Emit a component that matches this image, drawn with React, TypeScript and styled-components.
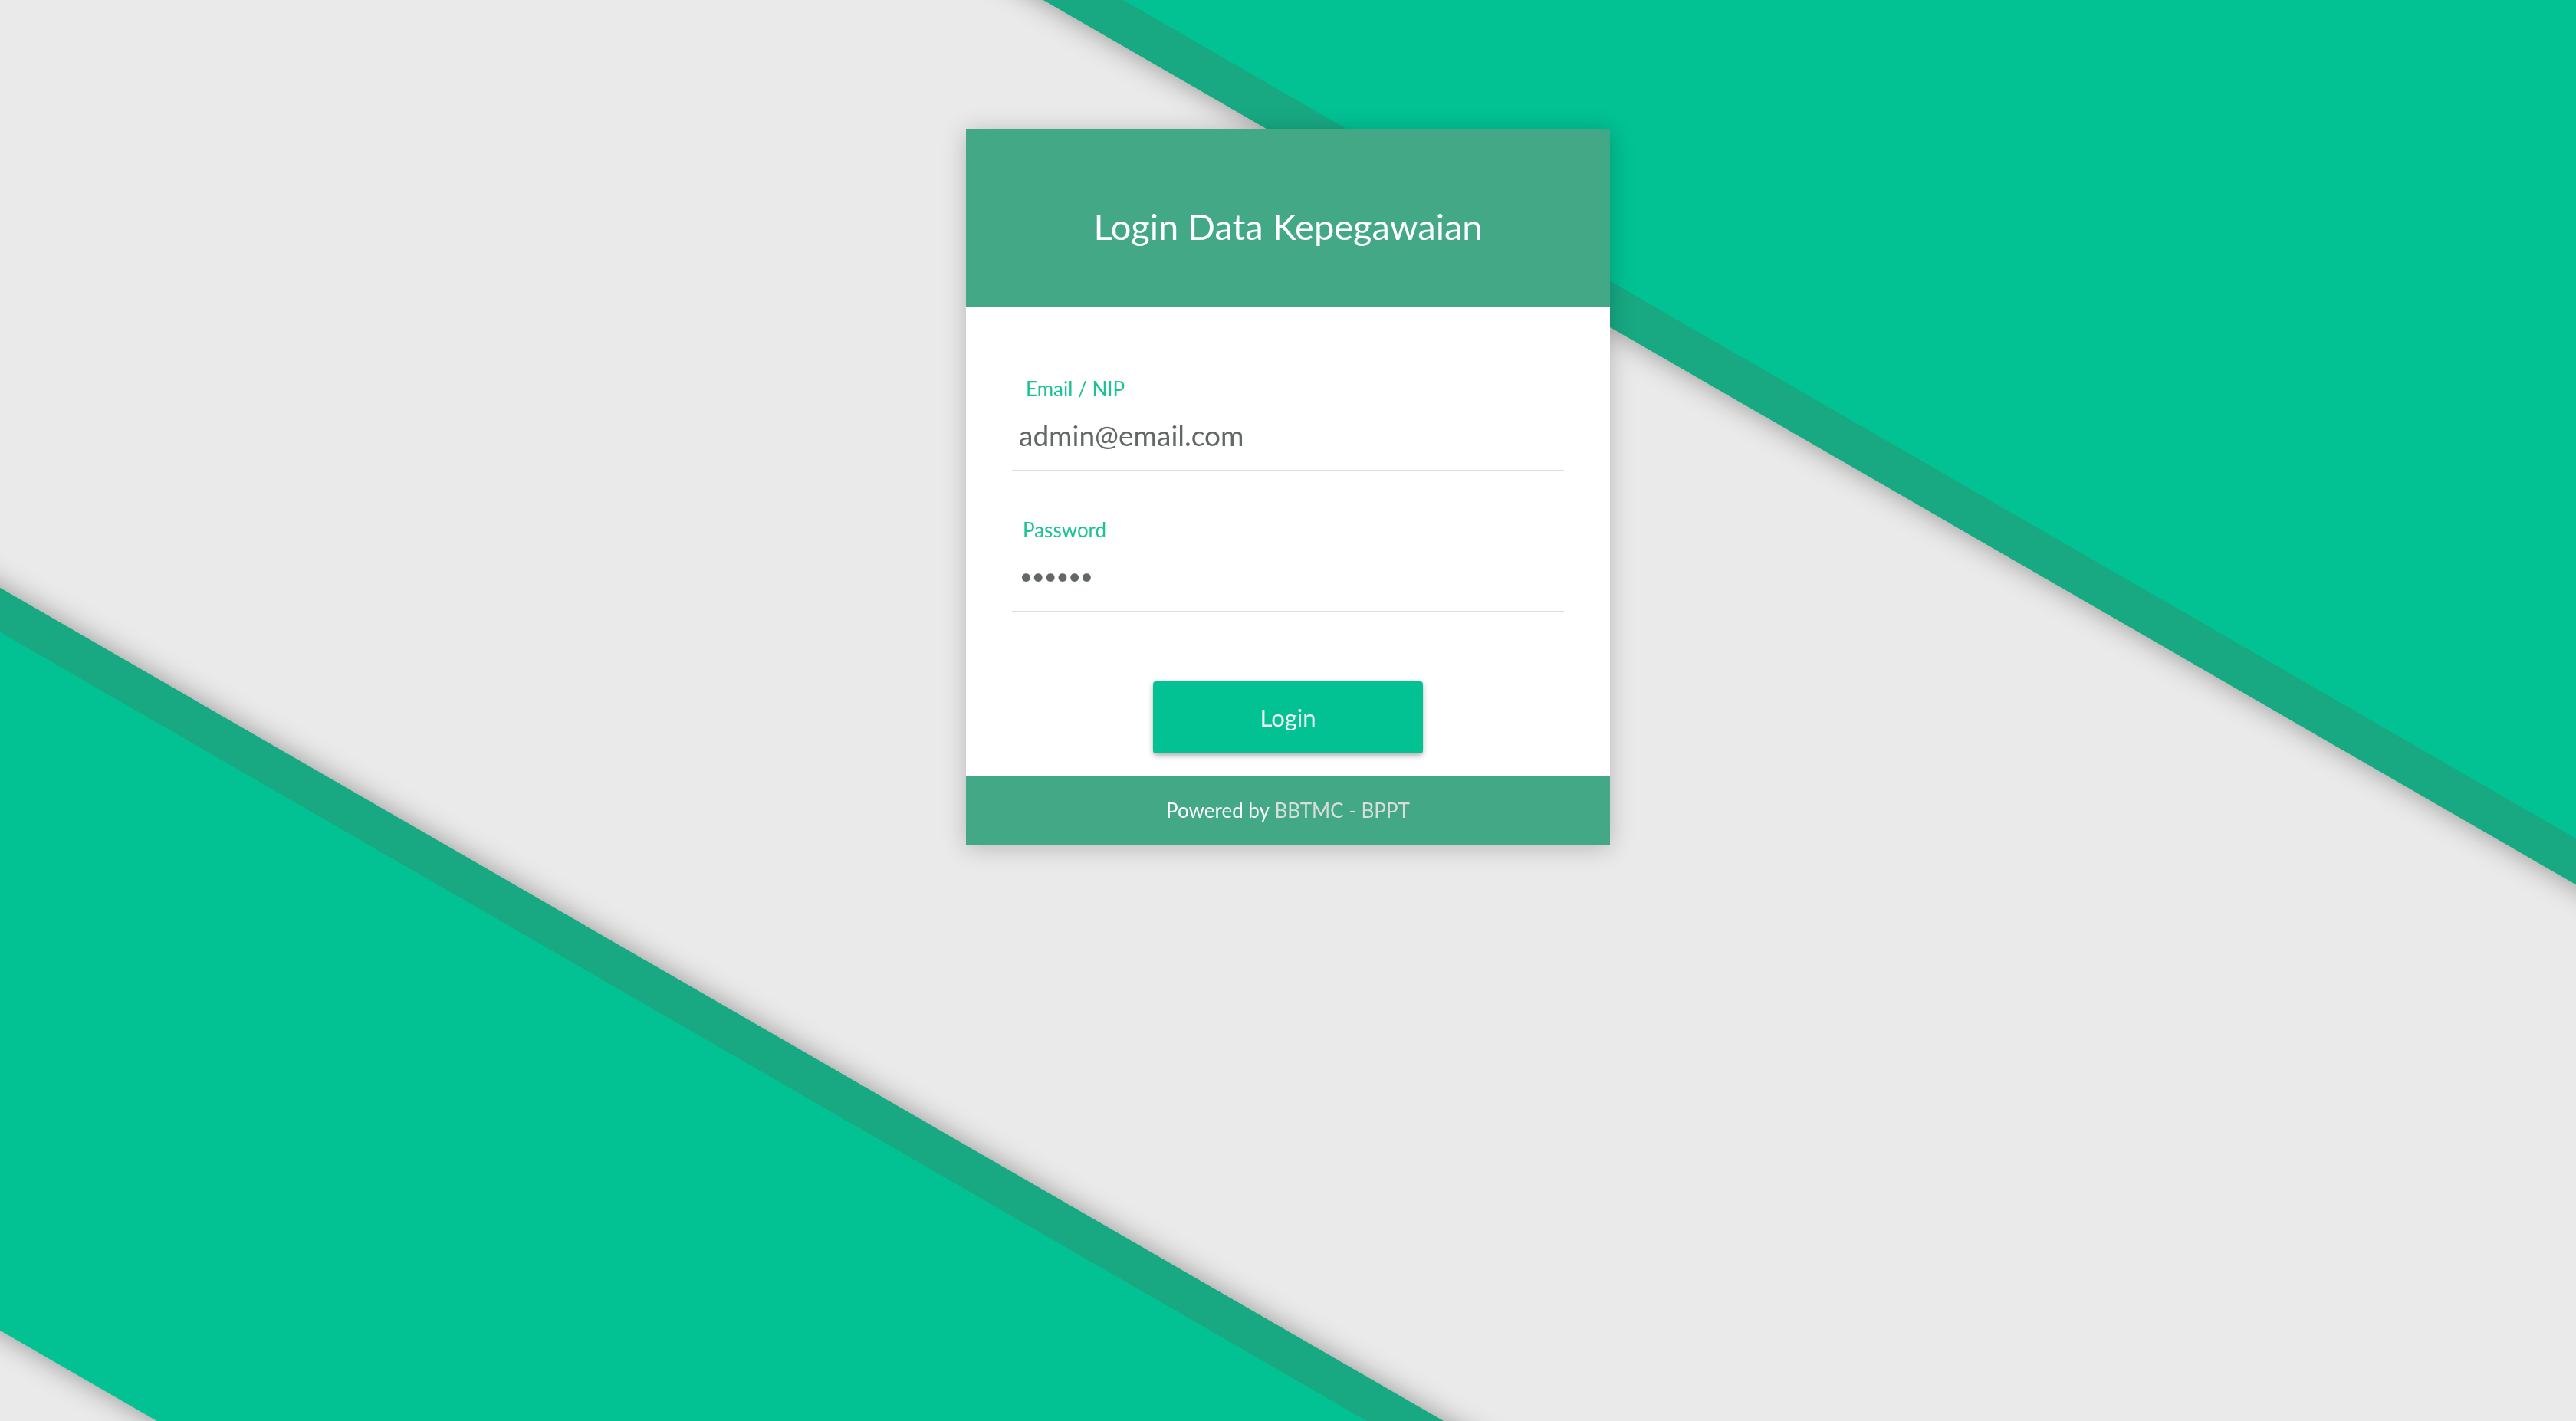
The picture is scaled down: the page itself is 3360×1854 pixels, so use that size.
import React from "react";
import styled, { createGlobalStyle } from "styled-components";

const GlobalStyle = createGlobalStyle`
  html, body {
    margin: 0;
    padding: 0;
    background: #eaeaea;
    font-family: Lato, "Open Sans", "Liberation Sans", sans-serif;
  }
  * { box-sizing: border-box; }
`;

const Backdrop = styled.div`
  position: fixed;
  inset: 0;
  overflow: hidden;
  z-index: 0;
  background: #eaeaea;
`;

const TopBand = styled.div`
  position: absolute;
  left: -1639px;
  top: -3000px;
  width: 6000px;
  height: 3000px;
  background: #02c293;
  border-bottom: 52px solid #18a983;
  transform-origin: 50% 100%;
  transform: rotate(30deg);
  box-shadow: 0 0 36px rgba(0, 0, 0, 0.38);
`;

const BottomBand = styled.div`
  position: absolute;
  left: -3000px;
  top: 767px;
  width: 6000px;
  height: 839px;
  background: #02c293;
  border-top: 50px solid #18a983;
  transform-origin: 50% 0;
  transform: rotate(30deg);
  box-shadow: 0 0 36px rgba(0, 0, 0, 0.38);
`;

const Page = styled.main`
  position: relative;
  z-index: 1;
  min-height: 100vh;
  display: flex;
  justify-content: center;
  align-items: flex-start;
  padding-top: 168px;
`;

const Card = styled.section`
  width: 840px;
  display: flex;
  flex-direction: column;
  background: #ffffff;
  box-shadow: 0 4px 30px rgba(0, 0, 0, 0.22);
`;

const Header = styled.header`
  height: 233px;
  padding-top: 99px;
  background: #42a886;
  text-align: center;
`;

const Title = styled.h1`
  margin: 0;
  font-size: 47px;
  line-height: 56px;
  font-weight: 400;
  color: #ffffff;
`;

const Body = styled.form`
  display: flex;
  flex-direction: column;
  padding: 91px 60px 29px;
  gap: 61px;
`;

const Field = styled.label`
  display: flex;
  flex-direction: column;
`;

const LabelText = styled.span<{ $inset: number }>`
  font-size: 26px;
  line-height: 30px;
  color: #1bc394;
  padding-left: ${(p) => p.$inset}px;
`;

const Input = styled.input<{ $masked?: boolean }>`
  height: 93px;
  border: none;
  border-bottom: 2px solid #dddddd;
  outline: none;
  padding: ${(p) => (p.$masked ? "0 0 2px 10px" : "0 0 0 9px")};
  margin: 0;
  font-family: Lato, "Open Sans", "Liberation Sans", sans-serif;
  font-size: ${(p) => (p.$masked ? "29px" : "37px")};
  color: #646767;
  background: transparent;
  letter-spacing: ${(p) => (p.$masked ? "-1px" : "0")};
`;

const ButtonRow = styled.div`
  display: flex;
  justify-content: center;
  margin-top: 29px;
`;

const LoginButton = styled.button`
  width: 352px;
  height: 94px;
  border: none;
  border-radius: 4px;
  background: #02c293;
  color: #f2f7f5;
  font-family: Lato, "Open Sans", "Liberation Sans", sans-serif;
  font-size: 31px;
  box-shadow: 0 3px 7px rgba(0, 0, 0, 0.32);
  cursor: pointer;
`;

const Footer = styled.footer`
  height: 90px;
  display: flex;
  align-items: center;
  justify-content: center;
  background: #42a886;
  color: #ffffff;
  font-size: 26px;
`;

const FooterLink = styled.a`
  color: #dadddb;
  text-decoration: none;
  margin-left: 0.25em;
`;

export default function App() {
  return (
    <>
      <GlobalStyle />
      <Backdrop>
        <TopBand />
        <BottomBand />
      </Backdrop>
      <Page>
        <Card>
          <Header>
            <Title>Login Data Kepegawaian</Title>
          </Header>
          <Body onSubmit={(e) => e.preventDefault()}>
            <Field>
              <LabelText $inset={18}>Email / NIP</LabelText>
              <Input type="text" defaultValue="admin@email.com" />
            </Field>
            <Field>
              <LabelText $inset={14}>Password</LabelText>
              <Input type="password" defaultValue="123456" $masked />
            </Field>
            <ButtonRow>
              <LoginButton type="submit">Login</LoginButton>
            </ButtonRow>
          </Body>
          <Footer>
            Powered by<FooterLink href="#">BBTMC - BPPT</FooterLink>
          </Footer>
        </Card>
      </Page>
    </>
  );
}
